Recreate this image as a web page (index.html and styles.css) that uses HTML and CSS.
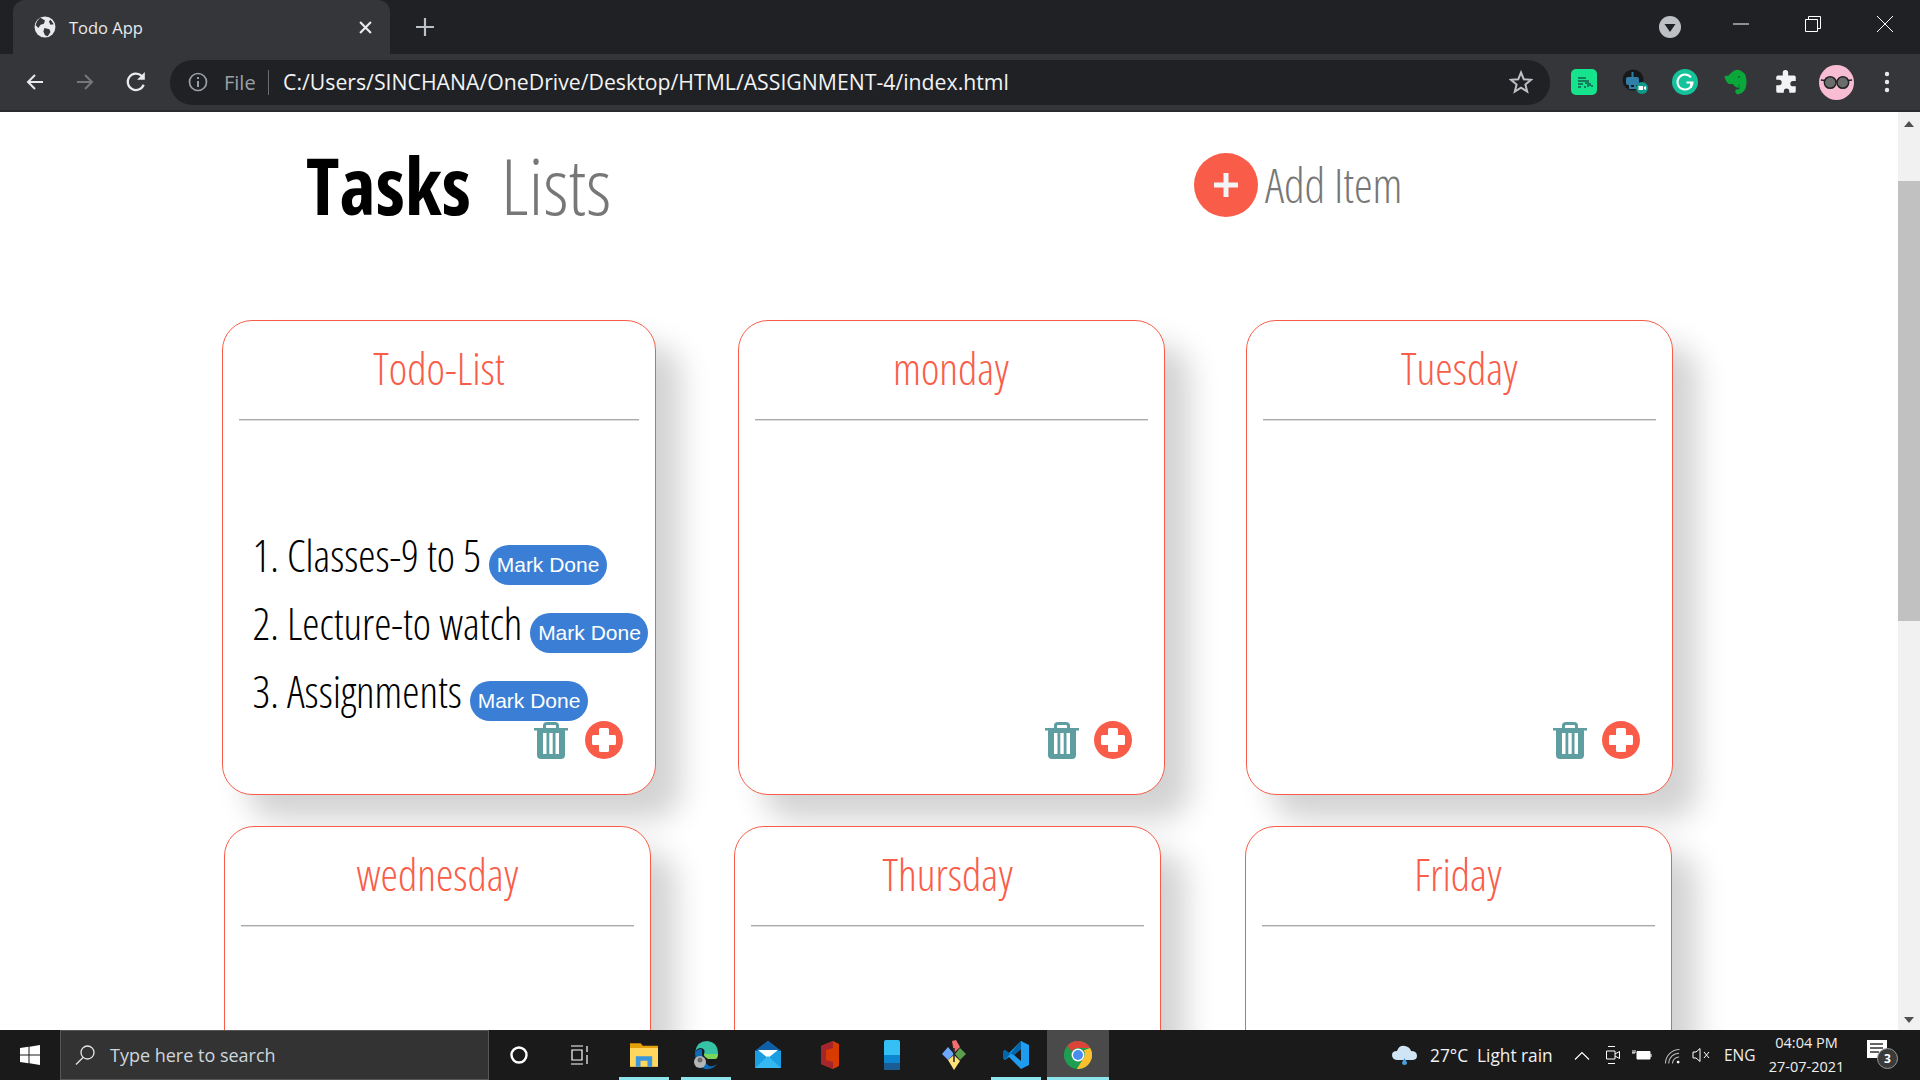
FILE: index.html
```html
<!DOCTYPE html>
<html lang="en">
<head>
<meta charset="utf-8">
<title>Todo App</title>
<link rel="stylesheet" href="styles.css">
</head>
<body>
<svg class="defs" width="0" height="0">
  <symbol id="trash" viewBox="0 0 36 38">
    <path fill="#5f9ea0" fill-rule="evenodd" d="M10 7V4.500Q10 1 14 1H22Q26 1 26 4.500V7H35V9.500H32V34Q32 38 28 38H8Q4 38 4 34V9.500H1V7ZM13 7H23V5Q23 4 22 4H14Q13 4 13 5ZM10 12V33H13.500V12ZM16.300 12V33H19.700V12ZM22.500 12V33H26V12Z"/>
  </symbol>
  <symbol id="plus" viewBox="0 0 38 38">
    <circle cx="19" cy="19" r="19" fill="#f95d49"/>
    <path fill="#fff" d="M15.500 7H22.500Q24 7 24 8.500V14H29.500Q31 14 31 15.500V22.500Q31 24 29.500 24H24V29.500Q24 31 22.500 31H15.500Q14 31 14 29.500V24H8.500Q7 24 7 22.500V15.500Q7 14 8.500 14H14V8.500Q14 7 15.500 7Z"/>
  </symbol>
</svg>

<header class="chrome">
  <div class="tabstrip">
    <div class="tab">
      <svg class="favicon" viewBox="0 0 20 20"><circle cx="10" cy="10" r="9.500" fill="#e8eaed"/><path fill="#35363a" d="M6 1.500L10 4 9 7 6 8 4 11 1.500 8.500Q2.500 3.500 6 1.500ZM9.500 11L14 12 15 14.500 12.500 18.500 10 17.500 8.500 14ZM15 3.500L18 7.500 15 8 13.500 5Z"/></svg>
      <span class="tab-title">Todo App</span>
      <svg class="tab-close" viewBox="0 0 12 12"><path d="M1 1L11 11M11 1L1 11" stroke="#e8eaed" stroke-width="2"/></svg>
    </div>
    <svg class="new-tab" viewBox="0 0 20 20"><path d="M10 1V19M1 10H19" stroke="#bdc1c6" stroke-width="2.200"/></svg>
    <div class="strip-spacer"></div>
    <svg class="tab-search" viewBox="0 0 22 22"><circle cx="11" cy="11" r="11" fill="#bdc1c6"/><path d="M5.500 8H16.500L11 16Z" fill="#202124"/></svg>
    <svg class="win-btn win-min" viewBox="0 0 16 16"><path d="M0 8H16" stroke="#fff" stroke-width="1"/></svg>
    <svg class="win-btn win-max" viewBox="0 0 16 16"><path d="M.5 3.500H12.500V15.500H.5ZM3.500 3.500V.5H15.500V12.500H12.500" fill="none" stroke="#fff"/></svg>
    <svg class="win-btn win-close" viewBox="0 0 16 16"><path d="M0 0L16 16M16 0L0 16" stroke="#fff" stroke-width="1"/></svg>
  </div>
  <div class="toolbar">
    <svg class="nav-icon nav-back" viewBox="0 0 20 20"><path d="M18 10H3M10 3L3 10L10 17" fill="none" stroke="#e8eaed" stroke-width="2"/></svg>
    <svg class="nav-icon nav-fwd" viewBox="0 0 20 20"><path d="M2 10H17M10 3L17 10L10 17" fill="none" stroke="#75777a" stroke-width="2"/></svg>
    <svg class="nav-icon nav-reload" viewBox="0 0 20 20"><path d="M17 12.500A7.500 7.500 0 1 1 15.300 4.500" fill="none" stroke="#e8eaed" stroke-width="2"/><path d="M18 1V8H11Z" fill="#e8eaed"/></svg>
    <div class="omnibox">
      <svg class="info" viewBox="0 0 20 20"><circle cx="10" cy="10" r="8.500" fill="none" stroke="#9aa0a6" stroke-width="1.700"/><path d="M10 9V15M10 5V7" stroke="#9aa0a6" stroke-width="2"/></svg>
      <span class="scheme">File</span>
      <span class="divider"></span>
      <span class="url">C:/Users/SINCHANA/OneDrive/Desktop/HTML/ASSIGNMENT-4/index.html</span>
      <svg class="star" viewBox="0 0 24 24"><path d="M12 2.500L14.800 9.300 22 9.800 16.400 14.500 18.200 21.500 12 17.700 5.800 21.500 7.600 14.500 2 9.800 9.200 9.300Z" fill="none" stroke="#bdc1c6" stroke-width="2"/></svg>
    </div>
    <div class="extensions">
      <svg class="ext" viewBox="0 0 26 26"><rect width="26" height="26" rx="5" fill="#16e48c"/><path d="M7 9H15M7 12H14M7 15H12M7 18H10M13 18H15M15 15V11M17 11V18M19 14V17M21 16V18" stroke="#155d4e" stroke-width="1.500" fill="none"/></svg>
      <svg class="ext" viewBox="0 0 26 26"><circle cx="11" cy="11" r="10.500" fill="#17181a"/><rect x="4" y="8" width="13" height="8" rx="2" fill="#2f7fa8"/><path d="M10.500 3V8M8 16V19H13V16" stroke="#2f7fa8" stroke-width="2" fill="none"/><circle cx="20" cy="19" r="6" fill="#109a8a"/><path d="M16.500 17H21V21H16.500ZM22 18L24 17V21L22 20Z" fill="#fff"/></svg>
      <svg class="ext" viewBox="0 0 26 26"><circle cx="13" cy="13" r="13" fill="#15c39a"/><path d="M19 8.500A7.500 7.500 0 1 0 20.500 13.500H14.500" fill="none" stroke="#fff" stroke-width="2"/><path d="M19 14V19" stroke="#fff" stroke-width="2"/></svg>
      <svg class="ext" viewBox="0 0 26 26"><path d="M6 6L8 4Q12 0 16 1Q23 3 23.500 11Q24 18 21 22Q18 26 14 25Q11 23 13 20.500Q16 21 17 19Q12 19 10 15H6Q2 12 1.500 7L6 6.500Z" fill="#0aa83a"/><path d="M16 20V15" stroke="#067a2a" stroke-width="1"/><circle cx="16" cy="8" r="1.200" fill="#067a2a"/></svg>
      <svg class="ext" viewBox="0 0 24 24"><path d="M9 3.500Q9 1 11.500 1T14 3.500V6H19.500Q21 6 21 7.500V11H18.500Q16 11 16 13.500T18.500 16H21V20.500Q21 22 19.500 22H15V20.500Q15 18 12.500 18T10 20.500V22H4.500Q3 22 3 20.500V15H5.500Q8 15 8 12.500T5.500 10H3V7.500Q3 6 4.500 6H9Z" fill="#f1f3f4"/></svg>
      <svg class="avatar" viewBox="0 0 36 36"><circle cx="18" cy="18" r="18" fill="#f9bdd3"/><circle cx="11.500" cy="18" r="6" fill="#6a6d6c" stroke="#222" stroke-width="1.500"/><circle cx="24.500" cy="18" r="6" fill="#6a6d6c" stroke="#222" stroke-width="1.500"/><path d="M2 15.500L6 16M17 17H19M30 16L34 15.500" stroke="#222" stroke-width="1.500"/></svg>
      <svg class="kebab" viewBox="0 0 6 22"><circle cx="3" cy="3" r="2.200" fill="#e8eaed"/><circle cx="3" cy="11" r="2.200" fill="#e8eaed"/><circle cx="3" cy="19" r="2.200" fill="#e8eaed"/></svg>
    </div>
  </div>
</header>

<div class="viewport">
  <main class="page">
    <nav class="topnav">
      <div class="tabs-title">
        <span class="h-tasks">Tasks</span>
        <span class="h-lists">Lists</span>
      </div>
      <div class="add-item">
        <svg class="add-circle" viewBox="0 0 64 64"><circle cx="32" cy="32" r="32" fill="#f95d49"/><path d="M32 20V44M20 32H44" stroke="#f2f4f7" stroke-width="5"/></svg>
        <span class="add-label">Add Item</span>
      </div>
    </nav>

    <div class="row row-one">
      <section class="card card-wide">
        <h2 class="card-title">Todo-List</h2>
        <hr class="card-rule">
        <ol class="todo">
          <li>Classes-9 to 5 <button class="done">Mark Done</button></li>
          <li>Lecture-to watch <button class="done">Mark Done</button></li>
          <li>Assignments <button class="done">Mark Done</button></li>
        </ol>
        <div class="card-actions actions-wide">
          <svg class="ico-trash"><use href="#trash"/></svg>
          <svg class="ico-plus"><use href="#plus"/></svg>
        </div>
      </section>
      <section class="card">
        <h2 class="card-title">monday</h2>
        <hr class="card-rule">
        <div class="card-actions">
          <svg class="ico-trash"><use href="#trash"/></svg>
          <svg class="ico-plus"><use href="#plus"/></svg>
        </div>
      </section>
      <section class="card">
        <h2 class="card-title">Tuesday</h2>
        <hr class="card-rule">
        <div class="card-actions">
          <svg class="ico-trash"><use href="#trash"/></svg>
          <svg class="ico-plus"><use href="#plus"/></svg>
        </div>
      </section>
    </div>

    <div class="row row-two">
      <section class="card">
        <h2 class="card-title">wednesday</h2>
        <hr class="card-rule">
      </section>
      <section class="card">
        <h2 class="card-title">Thursday</h2>
        <hr class="card-rule">
      </section>
      <section class="card">
        <h2 class="card-title">Friday</h2>
        <hr class="card-rule">
      </section>
    </div>
  </main>
  <aside class="scrollbar">
    <svg class="sb-arrow" viewBox="0 0 10 6"><path d="M5 0L10 6H0Z" fill="#505050"/></svg>
    <div class="sb-track"><div class="sb-thumb"></div></div>
    <svg class="sb-arrow" viewBox="0 0 10 6"><path d="M0 0H10L5 6Z" fill="#505050"/></svg>
  </aside>
</div>

<footer class="taskbar">
  <div class="start">
    <svg class="win-logo" viewBox="0 0 20 20"><path fill="#fff" d="M0 3L8.500 1.800V9.500H0ZM9.500 1.700L20 0V9.500H9.500ZM0 10.500H8.500V18.200L0 17ZM9.500 10.500H20V20L9.500 18.300Z"/></svg>
  </div>
  <div class="searchbox">
    <svg class="search-ico" viewBox="0 0 20 20"><circle cx="12.500" cy="7.500" r="6.500" fill="none" stroke="#e6e6e6" stroke-width="1.300"/><path d="M8 12.500L1 19.500" stroke="#e6e6e6" stroke-width="1.300"/></svg>
    <span class="search-text">Type here to search</span>
  </div>
  <div class="tb-btn tb-plain"><svg class="tb-small" viewBox="0 0 20 20"><circle cx="10" cy="10" r="7.500" fill="none" stroke="#fff" stroke-width="2.400"/></svg></div>
  <div class="tb-btn tb-plain tb-last-plain"><svg class="tb-small" viewBox="0 0 20 20"><path d="M2 1H14M2 19H14M3 5H13V15H3ZM18 1V7M18 10V19" fill="none" stroke="#fff" stroke-width="1.200"/></svg></div>
  <div class="tb-btn tb-active">
    <svg class="tb-app" viewBox="0 0 24 24"><path d="M0 2H9L11 4H24V22H0Z" fill="#e3a008"/><path d="M0 6H24V22H0Z" fill="#ffd75e"/><path d="M5 22V13H19V22H15V17H9V22Z" fill="#3a96dd"/></svg>
  </div>
  <div class="tb-btn tb-active">
    <svg class="tb-app tb-edge" viewBox="0 0 26 30"><path d="M2 12Q4 1 14 1Q25 2 25 14H11Q13 9 8 8Q4 8 2 12Z" fill="#36c3a5"/><path d="M25 14Q25 19 22 19H15Q10 16 11 14Z" fill="#7ad65b"/><path d="M2 12Q7 7 9 10Q8 20 16 26Q20 27 24 24Q20 30 12 29Q2 26 2 12Z" fill="#0d6bb8"/><circle cx="7" cy="22" r="6" fill="#b5b5b5"/><circle cx="7" cy="20" r="2.500" fill="#6b6b6b"/></svg>
  </div>
  <div class="tb-btn">
    <svg class="tb-app" viewBox="0 0 26 30"><path d="M0 11L13 1L26 11V28H0Z" fill="#1b9de2"/><path d="M0 11L13 1L26 11Z" fill="#0f5fa8"/><path d="M3 10H23L13 18Z" fill="#fff"/><path d="M0 28L13 16L26 28Z" fill="#35b8f1"/></svg>
  </div>
  <div class="tb-btn">
    <svg class="tb-app" viewBox="0 0 22 30"><path d="M2 6L14 1L20 4V26L14 29L2 24Z" fill="#d83b01"/><path d="M2 6L14 1V8L7 10V20L14 22V29L2 24Z" fill="#a4262c"/></svg>
  </div>
  <div class="tb-btn">
    <svg class="tb-app" viewBox="0 0 16 30"><rect width="16" height="30" rx="2" fill="#34c0f4"/><rect y="15" width="16" height="8" fill="#0c86cf"/><path d="M0 23H16V28Q16 30 14 30H2Q0 30 0 28Z" fill="#1b5c94"/></svg>
  </div>
  <div class="tb-btn">
    <svg class="tb-app" viewBox="0 0 26 30"><path d="M11 1L15 0L19 7L13 13Z" fill="#f26d6d"/><path d="M7 7L13 14L7 20L1 14Z" fill="#6ea8fe"/><path d="M19 8L25 14L19 20L14 14Z" fill="#5b9e4d"/><path d="M7 20L13 15L19 21L13 30Z" fill="#ffe27a"/><path d="M13 8V22" stroke="#222" stroke-width="1.500"/></svg>
  </div>
  <div class="tb-btn tb-active">
    <svg class="tb-app" viewBox="0 0 26 30"><path d="M18 1L26 5V25L18 29L6 17L2 20L0 18V12L2 10L6 13ZM18 9L11 15L18 21Z" fill="#1f9cf0"/><path d="M18 1V9L11 15L6 13L2 10L0 12V18L2 20Z" fill="#0065a9"/></svg>
  </div>
  <div class="tb-btn tb-active tb-current">
    <svg class="tb-app" viewBox="0 0 24 24"><circle cx="12" cy="12" r="12" fill="#1e9e53"/><path d="M12 0A12 12 0 0 1 22.400 6H12A6 6 0 0 0 6.800 9L2.800 4.300A12 12 0 0 1 12 0Z" fill="#db4437"/><path d="M22.400 6A12 12 0 0 1 11 24L16.800 14.500A6 6 0 0 0 17 8Z" fill="#fbc02d"/><circle cx="12" cy="12" r="5.500" fill="#fff"/><circle cx="12" cy="12" r="4.300" fill="#4a8cf0"/></svg>
  </div>
  <div class="tray">
    <svg class="cloud" viewBox="0 0 26 22"><path d="M6 16Q0 16 0 11Q0 7 5 7Q7 1 13 2Q18 3 19 7Q25 7 25 12Q25 16 20 16Z" fill="#cfe5f5"/><path d="M12.500 14L15 18.500A2.500 2.500 0 1 1 10 18.500Z" fill="#4aa0dc"/></svg>
    <span class="weather">27°C&nbsp; Light rain</span>
    <svg class="tray-ico chevron" viewBox="0 0 16 10"><path d="M1 9L8 2L15 9" fill="none" stroke="#fff" stroke-width="1.200"/></svg>
    <svg class="tray-ico tray-video" viewBox="0 0 14 20"><path d="M2 1.500H9M2 18.500H9M.5 6H9V14H.5ZM9 9L13.500 6.500V13.500L9 11" fill="none" stroke="#fff" stroke-width="1"/></svg>
    <svg class="tray-ico battery" viewBox="0 0 20 14"><path d="M5 3.500H18V11H5Z" fill="#fff" stroke="#fff"/><path d="M0 5H3M1 2V5M3 2V5" stroke="#fff" fill="none"/><path d="M19 6V9" stroke="#fff"/></svg>
    <svg class="tray-ico wifi" viewBox="0 0 16 18"><path d="M.5 17.500A15 15 0 0 1 15.500 2.500M4 17.500A11 11 0 0 1 15 6.500M8 17.500A7 7 0 0 1 15 10.500" fill="none" stroke="#bbb" stroke-width="1.100"/><circle cx="14" cy="16" r="1.500" fill="#fff"/></svg>
    <svg class="tray-ico volume" viewBox="0 0 18 18"><path d="M1 6H4L8 2.500V15.500L4 12H1Z" fill="none" stroke="#fff"/><path d="M12 6L17 12M17 6L12 12" stroke="#fff"/></svg>
    <span class="lang">ENG</span>
    <div class="clock"><span>04:04 PM</span><span>27-07-2021</span></div>
    <div class="notify">
      <svg class="notify-ico" viewBox="0 0 20 18"><path d="M0 0H20V18H0Z" fill="#fff"/><path d="M3 4H16M3 8H16M3 12H12" stroke="#333" stroke-width="1.300"/></svg>
      <span class="notify-badge">3</span>
    </div>
  </div>
</footer>
</body>
</html>
```

FILE: styles.css
```css
* { box-sizing: border-box; }
html, body { margin: 0; height: 100%; overflow: hidden; }
body {
  width: 1920px;
  height: 1080px;
  display: flex;
  flex-direction: column;
  background: #fff;
  font-family: "Open Sans", "Noto Sans", sans-serif;
}
.defs { position: absolute; }

/* browser chrome */
.chrome { height: 112px; flex: none; display: flex; flex-direction: column; background: #35363a; border-bottom: 2px solid #2a2b2e; }
.tabstrip { height: 54px; flex: none; background: #202124; display: flex; align-items: center; padding-left: 13px; }
.tab {
  width: 377px; height: 54px;
  background: #35363a;
  border-radius: 12px 12px 0 0;
  display: flex; align-items: center;
  padding: 0 18px 0 21px;
  align-self: flex-end;
}
.favicon { width: 22px; height: 22px; flex: none; }
.tab-title { font-size: 16.500px; font-stretch: 88%; color: #e8eaed; margin-left: 13px; flex: 1; }
.tab-close { width: 13px; height: 13px; flex: none; }
.new-tab { width: 20px; height: 20px; margin-left: 25px; flex: none; }
.strip-spacer { flex: 1; }
.tab-search { width: 22px; height: 22px; flex: none; margin-right: 52px; }
.win-btn { width: 16px; height: 16px; flex: none; margin-top: -6px; }
.win-min { margin-right: 56px; }
.win-max { margin-right: 56px; }
.win-close { margin-right: 27px; }

.toolbar { flex: 1; display: flex; align-items: center; padding: 0 0 0 25px; }
.nav-icon { width: 20px; height: 20px; flex: none; }
.nav-fwd { margin-left: 30px; }
.nav-reload { margin-left: 30px; width: 22px; height: 22px; }
.omnibox {
  width: 1380px; height: 45px; margin-left: 23px;
  background: #202124; border-radius: 23px;
  display: flex; align-items: center; padding: 0 17px 0 17px;
}
.info { width: 20px; height: 20px; flex: none; margin-left: 1px; }
.scheme { color: #9aa0a6; font-size: 20px; font-stretch: 88%; margin-left: 16px; width: 32px; flex: none; white-space: nowrap; }
.divider { width: 1px; height: 25px; background: #6a6c70; margin-left: 12px; flex: none; }
.url { color: #f1f3f4; font-size: 21.250px; font-stretch: 88%; margin-left: 14px; padding-bottom: 2px; flex: 1; white-space: nowrap; }
.star { width: 24px; height: 24px; flex: none; }
.extensions { display: flex; align-items: center; margin-left: 21px; }
.ext { width: 26px; height: 26px; flex: none; margin-right: 24.500px; }
.avatar { width: 35px; height: 35px; flex: none; margin-left: -5px; }
.kebab { width: 6px; height: 22px; flex: none; margin-left: 30px; }

/* page */
.viewport { flex: none; height: 918px; display: flex; overflow: hidden; }
.page { flex: 1; min-width: 0; overflow: hidden; }
.topnav { height: 208px; display: flex; align-items: flex-start; padding: 34px 0 0 306px; }
.tabs-title { display: flex; align-items: baseline; width: 888px; line-height: 1; }
.h-tasks { font-size: 78px; font-weight: 700; font-stretch: 75%; color: #000; }
.h-lists { font-size: 78px; font-weight: 300; font-stretch: 75%; color: #777; margin-left: 30px; }
.add-item { display: flex; align-items: center; margin-top: 7px; }
.add-circle { width: 64px; height: 64px; flex: none; }
.add-label { font-size: 47px; font-weight: 300; font-stretch: 75%; color: #777; margin-left: 7px; }

.row { display: flex; }
.row-one { padding-left: 222px; gap: 81.500px; margin-bottom: 31px; }
.row-two { padding-left: 224px; gap: 83.250px; }
.card {
  width: 427px; height: 475px; flex: none;
  background: #fff;
  border: 1px solid #f95d49;
  border-radius: 30px;
  box-shadow: 25px 25px 30px #d3d3d3;
  padding: 0 16px;
  display: flex; flex-direction: column;
}
.card-wide { width: 434px; }
.card-title {
  margin: 0; height: 98px; flex: none;
  display: flex; align-items: center; justify-content: center;
  font-size: 44px; font-weight: 300; font-stretch: 75%;
  color: #f95d49;
  padding-bottom: 4px;
}
.card-rule { margin: 0; border: 0; border-top: 1px solid #aaa; border-bottom: 1px solid #ddd; height: 2px; flex: none; }
.todo { margin: 0; padding: 101px 0 0 48px; font-size: 43.500px; font-weight: 300; font-stretch: 75%; color: #000; flex: 1; min-height: 0; line-height: 68px; list-style-position: outside; white-space: nowrap; }
.todo li { height: 68px; }
.done {
  font: 21px "Liberation Sans", sans-serif;
  color: #fff; background: #3a7fd5;
  border: 0; border-radius: 20px;
  width: 118px; height: 40px; padding: 0;
  vertical-align: 0;
}
.card-actions { display: flex; align-items: center; justify-content: flex-end; padding: 0 16px 35px 0; margin-top: auto; gap: 14px; flex: none; }
.actions-wide { padding-right: 16px; gap: 16px; }
.ico-trash { width: 36px; height: 38px; flex: none; }
.ico-plus { width: 38px; height: 38px; flex: none; }

.scrollbar { width: 22px; flex: none; background: #f1f1f1; display: flex; flex-direction: column; align-items: center; padding: 9px 0 7px; }
.sb-arrow { width: 10px; height: 6px; flex: none; }
.sb-track { flex: 1; width: 100%; padding-top: 54px; }
.sb-thumb { height: 440px; background: #c1c1c1; }

/* taskbar */
.taskbar { height: 50px; flex: none; background: #1a1a1a; display: flex; align-items: stretch; color: #fff; }
.start { width: 60px; flex: none; display: flex; align-items: center; justify-content: center; }
.win-logo { width: 20px; height: 20px; }
.searchbox { width: 429px; flex: none; background: #333; border: 1px solid #565656; display: flex; align-items: center; padding-left: 14px; }
.search-ico { width: 20px; height: 20px; flex: none; }
.search-text { font-size: 18px; font-stretch: 88%; color: #cfd6dc; margin-left: 15px; }
.tb-btn { width: 62px; flex: none; display: flex; align-items: center; justify-content: center; position: relative; }
.tb-plain { width: 60px; }
.tb-last-plain { margin-right: 4px; }
.tb-small { width: 20px; height: 20px; }
.tb-app { width: 28px; height: 30px; }
.tb-active::after { content: ""; position: absolute; left: 6px; right: 6px; bottom: 0; height: 3px; background: #8ce4ec; }
.tb-current { background: #4a4a4a; }
.tb-current::after { left: 0; right: 0; }
.tray { flex: 1; display: flex; align-items: center; padding-left: 283px; }
.cloud { width: 26px; height: 22px; flex: none; }
.weather { font-size: 17.300px; font-stretch: 88%; margin-left: 12px; width: 144px; flex: none; white-space: nowrap; color: #f2f2f2; }
.tray-ico { flex: none; }
.chevron { width: 16px; height: 11px; }
.tray-video { width: 14px; height: 20px; margin-left: 16px; }
.battery { width: 20px; height: 14px; margin-left: 12px; }
.wifi { width: 15px; height: 17px; margin-left: 13px; }
.volume { width: 18px; height: 18px; margin-left: 12px; }
.lang { font-size: 15.500px; font-stretch: 88%; margin-left: 14px; width: 28px; flex: none; color: #eee; white-space: nowrap; }
.clock { display: flex; flex-direction: column; align-items: center; font-size: 14.500px; font-stretch: 88%; line-height: 24px; margin-left: 17px; width: 75px; flex: none; color: #eee; white-space: nowrap; }
.notify { position: relative; margin-left: 23px; width: 32px; height: 40px; }
.notify-ico { width: 20px; height: 18px; position: absolute; left: 0; top: 5px; }
.notify-badge {
  position: absolute; left: 10px; top: 13px; width: 21px; height: 21px;
  border-radius: 50%; background: #3a3a3a; border: 1px solid #999;
  font-size: 12px; font-weight: 700; display: flex; align-items: center; justify-content: center;
}
```
